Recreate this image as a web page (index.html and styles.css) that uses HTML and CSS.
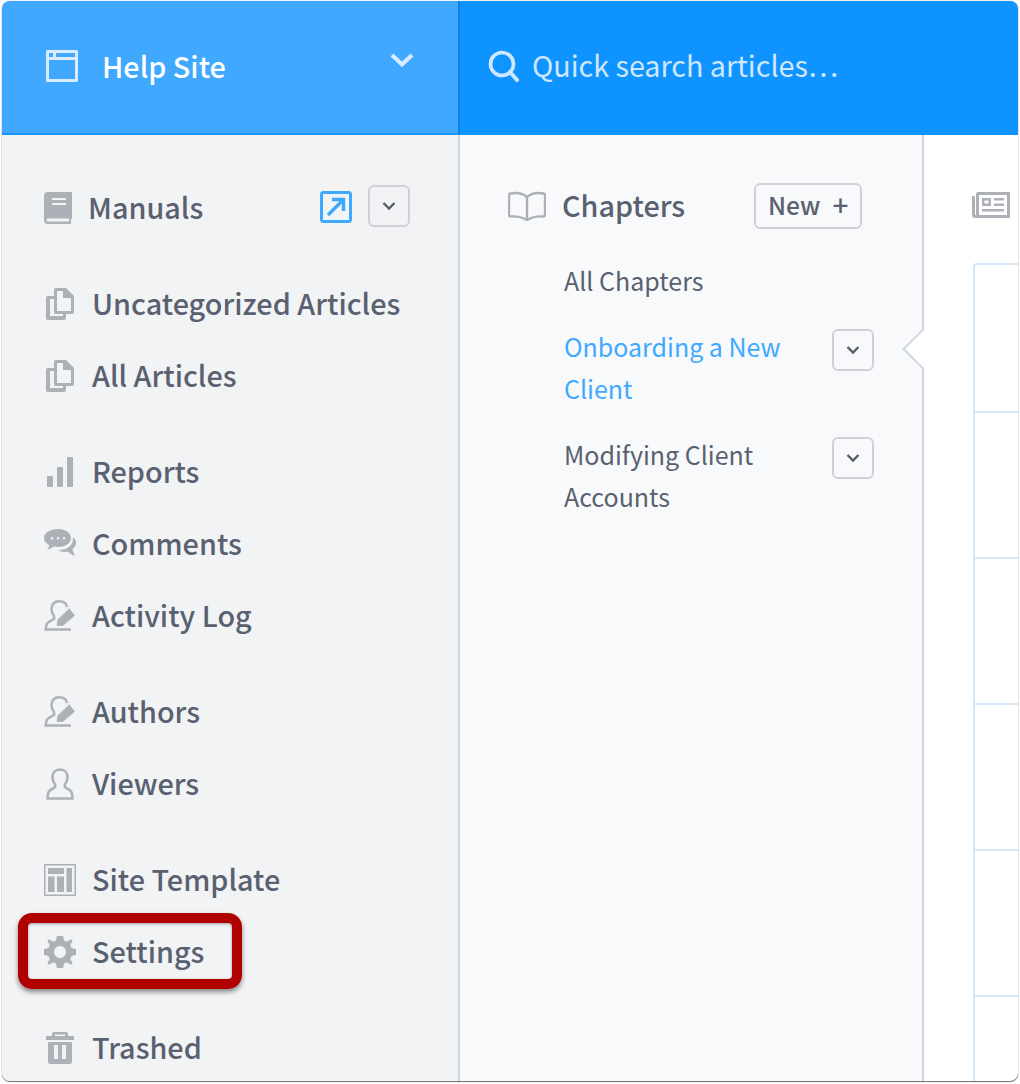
FILE: index.html
```html
<!DOCTYPE html>
<html lang="en">
<head>
<meta charset="utf-8">
<title>Help Site</title>
<link rel="stylesheet" href="styles.css">
</head>
<body>
<svg class="defs" width="0" height="0" aria-hidden="true">
  <symbol id="chev" viewBox="0 0 14 10"><path d="M1.5 2 7 7.5 12.500 2" fill="none" stroke="currentColor" stroke-width="2.400"/></symbol>
  <symbol id="pages" viewBox="0 0 28 32"><path fill-rule="evenodd" d="M2 8h6v3H4v17h13v-3h3v5a2 2 0 0 1-2 2H2a2 2 0 0 1-2-2V10a2 2 0 0 1 2-2z"/><path fill-rule="evenodd" d="M10 0h10l8 8v16a2 2 0 0 1-2 2H10a2 2 0 0 1-2-2V2a2 2 0 0 1 2-2zm1 3v20h14V10h-8V3z"/></symbol>
  <symbol id="author" viewBox="0 0 32 32"><path d="M10.500 20c-.5-1.500-.5-3-.5-4-1.500-1.800-2.500-4-2.500-7C7.500 4 10.500 1.300 15 1.300c4.500 0 7.500 2 8 5.700M10 18.500c-1 1.500-3 2.300-5 3.300-2 1-3 3-3.300 7.700H27" fill="none" stroke="currentColor" stroke-width="2.400"/><path d="M25.300 7.300l6.400 8.400L19.500 26l-7.500.5.700-6.800z" stroke="#f1f3f5" stroke-width="1.200"/></symbol>
</svg>
<div class="window">
  <aside class="side">
    <header class="site-head">
      <svg class="ic-site" viewBox="0 0 32 32"><path fill-rule="evenodd" d="M1.500 0h29A1.500 1.500 0 0 1 32 1.500v29a1.500 1.500 0 0 1-1.500 1.500h-29A1.500 1.500 0 0 1 0 30.500v-29A1.500 1.500 0 0 1 1.500 0zM3 10v19h26V10zm0-7v4h4V3zm7 0v4h19V3z"/></svg>
      <span class="site-name">Help Site</span>
      <svg class="ic-caret" viewBox="0 0 24 14"><path d="M2 2l10 9.500L22 2" fill="none" stroke="currentColor" stroke-width="4"/></svg>
    </header>
    <nav class="side-nav">
      <section class="group">
        <div class="row row-manuals">
          <svg class="ic ic-book" viewBox="0 0 28 32"><path fill-rule="evenodd" d="M4 0h24v27h-1v5H4a4 4 0 0 1-4-4V4a4 4 0 0 1 4-4zm4 6v2h14V6zm0 5v2h14v-2zM4 26.500a1.500 1.500 0 0 0 0 3h21v-3z"/></svg>
          <span class="label label-manuals">Manuals</span>
          <svg class="ic-open" viewBox="0 0 32 32"><rect x="1.500" y="1.500" width="29" height="29" rx="2" fill="none" stroke="currentColor" stroke-width="3"/><path d="M8 24 22 10M12 8.500h11.500V20" fill="none" stroke="currentColor" stroke-width="3.400"/></svg>
          <button class="chev-btn"><svg viewBox="0 0 14 10"><use href="#chev"/></svg></button>
        </div>
      </section>
      <section class="group">
        <a class="row"><svg class="ic ic-pg" viewBox="0 0 28 32"><use href="#pages"/></svg><span class="label">Uncategorized Articles</span></a>
        <a class="row"><svg class="ic ic-pg" viewBox="0 0 28 32"><use href="#pages"/></svg><span class="label">All Articles</span></a>
      </section>
      <section class="group">
        <a class="row"><svg class="ic ic-bars" viewBox="0 0 26 30"><rect x="0" y="19" width="6" height="11" rx="1"/><rect x="10" y="10" width="6" height="20" rx="1"/><rect x="20" y="0" width="6" height="30" rx="1"/></svg><span class="label">Reports</span></a>
        <a class="row"><svg class="ic ic-chat" viewBox="0 0 32 28"><path fill-rule="evenodd" d="M14 0c7.500 0 13 3.800 13 9s-5.500 9-13 9c-1.500 0-3-.2-4.300-.5C8 19 6 20 3 20.500c1-1 2-2.500 2.300-4.300C2 14.500 0 12 0 9 0 3.800 6.500 0 14 0zM8 8a1.300 1.300 0 1 0 0 2.600A1.300 1.300 0 0 0 8 8zm6 0a1.300 1.300 0 1 0 0 2.600A1.300 1.300 0 0 0 14 8zm6 0a1.300 1.300 0 1 0 0 2.600A1.300 1.300 0 0 0 20 8z"/><path d="M29 8c2 1.800 3 3.500 3 6 0 2.500-1.500 4.500-3.500 6 .3 2 1.500 5 2.500 7-3-1-6-3-7-4.500-3 .8-7 .5-10-1.500 7 .5 16-3 15-13z"/></svg><span class="label">Comments</span></a>
        <a class="row"><svg class="ic ic-auth" viewBox="0 0 32 32"><use href="#author"/></svg><span class="label">Activity Log</span></a>
      </section>
      <section class="group">
        <a class="row"><svg class="ic ic-auth" viewBox="0 0 32 32"><use href="#author"/></svg><span class="label">Authors</span></a>
        <a class="row"><svg class="ic ic-view" viewBox="0 0 28 32"><path d="M14 1.500c-5 0-7.500 3.500-7.500 7.500 0 3 1 5.500 2.500 7.500.8 2-.5 3.500-3 4.500-3 1.200-4.300 3-4.500 9.500h25c-.2-6.500-1.500-8.300-4.500-9.500-2.500-1-3.800-2.500-3-4.500 1.500-2 2.500-4.500 2.500-7.500 0-4-2.500-7.500-7.500-7.500z" fill="none" stroke="currentColor" stroke-width="2.600"/></svg><span class="label">Viewers</span></a>
      </section>
      <section class="group">
        <a class="row"><svg class="ic ic-tpl" viewBox="0 0 32 32"><path fill-rule="evenodd" d="M0 0h32v32H0zm1.500 1.500v29h29v-29z"/><path d="M4 4h16v6H4zM22.500 4H28v24h-5.500zM4 12.500h6.500V28H4zM13 12.500h7V28h-7z"/></svg><span class="label">Site Template</span></a>
        <a class="row row-settings"><svg class="ic ic-gear" viewBox="0 0 32 32"><path fill-rule="evenodd" d="M13 0h6l1 4.500 3 1.300L27 3.300 28.700 5l-2.500 4 1.300 3 4.500 1v6l-4.500 1-1.300 3 2.500 4-1.700 1.700-4-2.500-3 1.300-1 4.500h-6l-1-4.500-3-1.300-4 2.500L3.300 27l2.500-4-1.300-3L0 19v-6l4.500-1 1.300-3-2.500-4L5 3.300l4 2.500 3-1.300zm3 10a6 6 0 1 0 0 12 6 6 0 0 0 0-12z"/></svg><span class="label">Settings</span><span class="callout"></span></a>
      </section>
      <section class="group">
        <a class="row"><svg class="ic ic-trash" viewBox="0 0 28 32"><path fill-rule="evenodd" d="M8 0h12a2 2 0 0 1 2 2v2h6v4H0V4h6V2a2 2 0 0 1 2-2zm1 2.500V4h10V2.500zM2 10h24v20a2 2 0 0 1-2 2H4a2 2 0 0 1-2-2zm6 3v14h4V13zm8 0v14h4V13z"/></svg><span class="label">Trashed</span></a>
      </section>
    </nav>
  </aside>
  <div class="main">
    <header class="search-head">
      <svg class="ic-search" viewBox="0 0 32 32"><circle cx="14" cy="14" r="11.500" fill="none" stroke="currentColor" stroke-width="3.600"/><path d="M22 22l7 8" fill="none" stroke="currentColor" stroke-width="4" stroke-linecap="round"/></svg>
      <span class="search-text">Quick search articles…</span>
    </header>
    <div class="panes">
      <section class="chapters">
        <span class="notch"></span>
        <div class="ch-head">
          <svg class="ic-open-book" viewBox="0 0 38 30"><path d="M19 6C15 2.500 8 1.500 2.500 2.500 1.500 2.700 1 3.200 1 4v20c0 1 .7 1.500 1.500 1.500C8 25 14 26 19 29c5-3 11-4 16.500-3.500.8 0 1.500-.5 1.500-1.500V4c0-.8-.5-1.300-1.500-1.500C30 1.500 23 2.500 19 6zm0 0v22" fill="none" stroke="currentColor" stroke-width="2.400"/></svg>
          <span class="ch-title">Chapters</span>
          <button class="new-btn"><span class="new-text">New</span><span class="plus">+</span></button>
        </div>
        <ul class="ch-list">
          <li class="ch-item ch-all">All Chapters</li>
          <li class="ch-item ch-active"><span class="ch-name">Onboarding a New Client</span><button class="chev-btn"><svg viewBox="0 0 14 10"><use href="#chev"/></svg></button></li>
          <li class="ch-item"><span class="ch-name">Modifying Client Accounts</span><button class="chev-btn"><svg viewBox="0 0 14 10"><use href="#chev"/></svg></button></li>
        </ul>
      </section>
      <section class="articles">
        <svg class="ic-news" viewBox="0 0 38 26"><path fill-rule="evenodd" d="M6 0h32v26H3a3 3 0 0 1-3-3V4h3v18.500a.5.5 0 0 0 1 0V2a2 2 0 0 1 2-2zm1 3v20h28V3zm3 3h9v8h-9zm2.500 2.500v3h4v-3zM22 6h10v2.500H22zM22 11.500h10V14H22zM10 17h22v2.500H10z"/></svg>
        <div class="table">
          <div class="t-row t-first"></div>
          <div class="t-row"></div>
          <div class="t-row"></div>
          <div class="t-row"></div>
          <div class="t-row"></div>
          <div class="t-row"></div>
        </div>
      </section>
    </div>
  </div>
</div>
</body>
</html>
```

FILE: styles.css
```css
* { box-sizing: border-box; }
html, body { margin: 0; padding: 0; background: #fff; }
body { height: 1084px; overflow: hidden; font-family: "Noto Sans CJK SC", "Noto Sans", sans-serif; }
.defs { position: absolute; }
.window {
  display: flex;
  width: 1016px;
  height: 1080px;
  margin: 1px 2px 0;
  border-radius: 8px;
  overflow: hidden;
  box-shadow: 0 1px 1px rgba(0,0,0,.55), 0 0 1px rgba(0,0,0,.6);
  background: #fff;
}
.side { flex: 0 0 458px; display: flex; flex-direction: column; background: #f1f3f5; border-right: 2px solid #cfd4dc; }
.site-head {
  position: relative;
  flex: 0 0 134px;
  margin-right: -2px;
  display: flex;
  align-items: center;
  padding: 0 0 2px 44px;
  background: #40a8ff;
  border-bottom: 2px solid #1a96ff;
  border-right: 2px solid #0a80e6;
  color: #fff;
}
.ic-site { width: 32px; height: 32px; fill: #d9ecff; }
.site-name { margin-left: 24px; font-size: 28.800px; line-height: 36px; font-weight: 500; }
.ic-caret { width: 24px; height: 14px; margin-left: auto; margin-right: 44px; margin-top: -12px; color: #d9ecff; }
.side-nav { display: flex; flex-direction: column; gap: 24px; padding-top: 37px; }
.row { position: relative; display: flex; align-items: center; height: 72px; padding-left: 43px; color: #596170; }
.ic { flex: none; fill: #adb0b7; color: #adb0b7; }
.label { position: absolute; left: 90px; top: 16px; font-size: 28.800px; line-height: 38px; font-weight: 500; white-space: nowrap; }
.label-manuals { left: 86px; }
.ic-book { width: 28px; height: 32px; margin-left: -1px; }
.ic-pg { width: 28px; height: 32px; margin-left: 1px; }
.ic-bars { width: 26px; height: 30px; margin-left: 2px; }
.ic-chat { width: 32px; height: 28px; margin-top: -2px; margin-left: -1px; }
.ic-auth { width: 32px; height: 32px; margin-left: -1px; }
.ic-view { width: 28px; height: 32px; margin-left: 1px; }
.ic-tpl { width: 32px; height: 32px; margin-left: -1px; }
.ic-gear { width: 32px; height: 32px; margin-left: -1px; }
.ic-trash { width: 28px; height: 32px; margin-left: 1px; }
.ic-open { position: absolute; left: 318px; top: 19px; width: 32px; height: 32px; color: #3fa9ff; }
.row-manuals .chev-btn { position: absolute; left: 366px; top: 13px; }
.chev-btn {
  flex: none;
  width: 42px;
  height: 42px;
  padding: 0;
  display: flex;
  align-items: center;
  justify-content: center;
  background: transparent;
  border: 2px solid #cfd1d6;
  border-radius: 6px;
  color: #565d6b;
}
.chev-btn svg { width: 14px; height: 10px; }
.callout {
  position: absolute;
  left: 16px;
  top: -3px;
  width: 224px;
  height: 76px;
  border: 10px solid #b00000;
  border-radius: 14px;
  box-shadow: 0 3px 5px rgba(0,0,0,.45), inset 0 1px 3px rgba(0,0,0,.35);
}
.main { flex: 1; min-width: 0; display: flex; flex-direction: column; }
.search-head { flex: 0 0 134px; display: flex; align-items: center; padding: 0 0 2px 28px; background: #0f94ff; color: #cfe7ff; }
.ic-search { width: 32px; height: 32px; margin-top: -2px; }
.search-text { margin-left: 12px; margin-top: -4px; font-size: 28.700px; line-height: 36px; font-weight: 400; white-space: nowrap; }
.panes { flex: 1; min-height: 0; display: flex; }
.chapters { position: relative; flex: 0 0 464px; background: #f8f9fb; border-right: 2px solid #d0d6de; padding-top: 48px; color: #596170; }
.notch {
  position: absolute;
  right: -14px;
  top: 200px;
  width: 28px;
  height: 28px;
  background: #fff;
  border-left: 2px solid #d0d6de;
  border-bottom: 2px solid #d0d6de;
  transform: rotate(45deg);
}
.ch-head { display: flex; align-items: center; height: 46px; padding-left: 48px; }
.ic-open-book { width: 38px; height: 30px; color: #adb0b7; }
.ch-title { margin-left: 16px; margin-top: -2px; font-size: 28.800px; line-height: 36px; font-weight: 500; }
.new-btn {
  margin-left: 69px;
  width: 108px;
  height: 46px;
  padding: 0;
  display: flex;
  align-items: center;
  justify-content: center;
  gap: 12px;
  background: transparent;
  border: 2px solid #cfd1d6;
  border-radius: 6px;
  color: #596170;
  font-family: inherit;
  font-size: 24.600px;
  line-height: 32px;
  font-weight: 500;
}
.new-text { margin-top: -4px; }
.plus { font-size: 28px; margin-top: -4px; }
.ch-list { list-style: none; margin: 0; padding: 30px 0 0 104px; }
.ch-item { display: flex; align-items: flex-start; justify-content: space-between; width: 310px; margin-bottom: 24px; font-size: 25px; line-height: 42px; }
.ch-name { width: 250px; }
.ch-active { color: #3fa9ff; }
.ch-item .chev-btn { margin-top: 4px; color: #565d6b; }
.articles { flex: 1; min-width: 0; padding: 57px 0 0 49px; }
.ic-news { display: block; width: 38px; height: 26px; margin-bottom: 45px; margin-left: -1px; fill: #adb0b7; }
.table { border: 2px solid #d6e8f7; border-right: 0; border-bottom: 0; border-top-left-radius: 4px; height: 900px; }
.t-row { height: 146px; border-bottom: 2px solid #d6e8f7; }
.t-first { height: 148px; }
```
